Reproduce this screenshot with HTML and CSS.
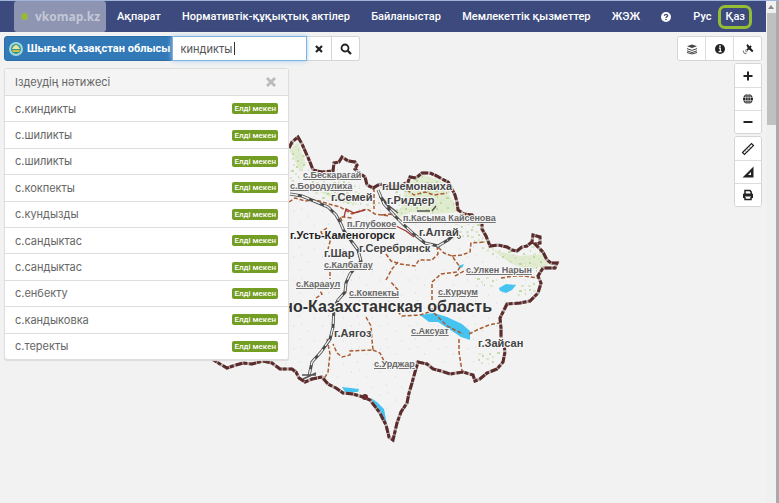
FILE: index.html
```html
<!DOCTYPE html>
<html lang="kk">
<head>
<meta charset="utf-8">
<title>vkomap.kz</title>
<link rel="stylesheet" href="styles.css">
</head>
<body>
<div class="page">
  <header class="topbar">
    <a class="brand" href="#"><span class="dot"></span>vkomap.kz</a>
    <nav class="menu">
      <a href="#">Ақпарат</a>
      <a href="#">Нормативтік-құқықтық актілер</a>
      <a href="#">Байланыстар</a>
      <a href="#">Мемлекеттік қызметтер</a>
      <a href="#">ЖЭЖ</a>
      <a href="#" aria-label="Көмек"><svg class="help" viewBox="0 0 10 10"><circle cx="5" cy="5" r="5" fill="#fff"/><path d="M3.4 3.8Q3.6 2.4 5 2.4T6.6 3.7Q6.6 4.5 5.7 4.9Q5 5.2 5 6" fill="none" stroke="#3c4a7d" stroke-width="1.3"/><circle cx="5" cy="7.5" r=".8" fill="#3c4a7d"/></svg></a>
    </nav>
    <div class="langs"><a href="#">Рус</a><a class="active" href="#">Қаз</a></div>
  </header>
  <main class="stage">
    <svg class="map" width="600" height="471" viewBox="0 32 600 471">
      <defs>
        <path id="edge" d="M289 148L292 142L298 137L302 144L306 153L310 162L313 170L322 172L333 171L334 163L339 162L342 157L348 161L355 162L357 165L355 169L362 175L365 177L367 185L373 188L380 184L390 187L400 186L408 182L410 177L416 178L422 173L430 173L437 176L442 179L448 182L451 187L455 195L457 202L458 210L464 214L472 215L478 221L482 223L482 229L486 236L490 246L498 245L507 247L512 250L517 251L522 247L527 246L532 242L533 235L540 237L540 243L535 244L543 252L547 260L551 263L557 263L555 268L549 268L543 268L538 276L541 283L538 293L530 301L520 303L507 304L503 312L500 318L501 328L501 337L504 345L505 352L503 362L497 369L487 373L480 379L475 381L473 375L463 372L450 374L441 371L433 369L427 364L418 362L415 372L412 383L409 393L407 403L401 412L397 423L393 440L389 437L386 425L380 413L370 400L363 397L353 394L343 393L336 388L328 384L322 377L312 379L305 382L299 378L296 372L292 369L280 369L272 363L263 361L252 364L243 363L236 365L227 368L220 364L212 359"/>
        <clipPath id="inside"><path d="M289 148L298 137L313 170L333 165L342 157L357 165L367 185L408 182L422 173L442 179L455 195L459 212L482 223L490 246L517 251L533 235L540 237L547 260L557 263L538 278L538 293L507 304L500 318L505 352L475 381L418 362L393 440L363 397L328 384L305 382L280 369L212 359L212 148Z"/></clipPath>
        <pattern id="grass" width="31" height="27" patternUnits="userSpaceOnUse"><path d="M1 2h3M9 1h1M17 5h2M3 8h1M12 9h3M24 3h2M27 11h2M6 14h2M19 15h1M2 20h2M13 19h2M23 21h3M9 25h1M18 26h2M29 24h1" stroke="#b2d391" stroke-width="1.5"/><path d="M5 4h3M14 3h2M21 8h3M7 11h2M16 12h2M1 16h3M11 16h2M25 16h3M6 21h3M17 22h2M27 6h2M13 24h2M22 25h2M28 20h2" stroke="#dae6c6" stroke-width="2"/></pattern>
        <pattern id="specks" width="29" height="23" patternUnits="userSpaceOnUse"><path d="M3 4h1M18 9h1M9 17h1" stroke="#c3d6e2"/><path d="M24 19h1M11 2h1" stroke="#d3dfc8"/></pattern>
      </defs>
      <use href="#edge" fill="#f3f3f4"/>
      <g clip-path="url(#inside)">
        <path d="M212 137h346v304H212z" fill="url(#specks)"/>
        <path d="M405 186L421 174L441 181L455 204L457 212L436 214L412 212L392 220L402 206ZM316 190L336 194L360 205L340 202ZM290 150L298 142L306 164L300 172ZM492 250L520 256L544 254L550 264L530 270L512 264Z" fill="#cfe4b2" opacity=".55"/>
        <path d="M288 142L299 140L307 163L299 182L288 181ZM310 174L343 173L367 195L385 204L372 209L340 203L314 198L310 184ZM387 188L421 173L445 181L456 205L439 214L413 211L391 218L402 199ZM455 215L480 222L486 244L466 242L455 228ZM480 247L521 251L535 244L555 263L536 274L520 265L497 258ZM515 283L541 282L535 299L519 298ZM477 353L502 351L498 364L479 365ZM472 273L504 281L491 289L475 286Z" fill="url(#grass)"/>
      </g>
      <g fill="#45c4f1">
        <path d="M420 315L434 313L447 317L462 324L470 331L470 340L461 337L452 331L438 322L429 322Z"/>
        <path d="M499 288L506 284L516 285L512 290L506 293L500 291Z"/>
        <path d="M371 398L377 402L384 409L387 425L382 421L377 410ZM342 387L359 389L358 392L345 392ZM436 246L442 243L439 249ZM458 266L464 264L462 268Z"/>
      </g>
      <g fill="none" stroke="#a85c32" stroke-width="1.5" stroke-dasharray="4 2">
        <path d="M289 202L295 198L305 201L316 200L329 204L340 207L352 214L360 211L367 209L375 214L389 216"/>
        <path d="M374 188L374 209M382 215L390 214L398 218M407 190L414 195L425 192L434 195L447 193M424 218L430 221L446 217"/>
        <path d="M342 221L340 217L344 217L352 218M327 228L321 232L325 239L331 238L328 249"/>
        <path d="M386 254L391 261L400 264L415 266L419 260L432 260L438 254L437 246L444 253L452 256L460 267L457 272L441 274L432 282L432 299L432 311L420 315L402 316L398 312"/>
        <path d="M386 280L392 269L398 262M452 256L462 255L470 252L471 243L485 242"/>
        <path d="M455 276L466 270M501 278L514 276L524 276L538 278"/>
        <path d="M330 272L330 279M316 298L322 294L320 291"/>
        <path d="M366 317L371 326L372 340L373 350L350 351L350 355L342 357L337 353L333 344M327 339L330 354L328 372L324 379"/>
        <path d="M373 350L380 353L385 363M398 290L390 281M459 339L459 352L462 371M469 334L479 329L489 325L499 323"/>
        <path d="M434 313L447 326L463 334"/>
      </g>
      <g fill="none" stroke="#4a4a4a" stroke-width="3">
        <path id="rails" d="M290 194L302 196L314 201L328 207L336 215L340 222L344 231L352 242L358 250L361 261L350 274L346 283L345 292L338 300L334 308L333 327L330 339L321 352L312 362L309 376"/>
        <path d="M378 190L384 204L394 215L405 226L415 235L425 243L438 246L448 240L456 233M380 196L390 209"/>
      </g>
      <g fill="none" stroke="#eee" stroke-width="1.4" stroke-dasharray="8 4">
        <use href="#rails"/>
        <path d="M378 190L384 204L394 215L405 226L415 235L425 243L438 246L448 240"/>
      </g>
      <path d="M302 375H316M303 379L316 373M417 211H430M432 211L436 206M388 205L398 213" stroke="#555" fill="none" stroke-width="1.5"/>
      <path d="M396 226L406 231L414 237M344 217L346 209L354 213L365 210" stroke="#a33731" stroke-width="1.3" fill="none"/>
      <circle cx="459" cy="237" r="1.5" fill="none" stroke="#555"/>
      <use href="#edge" fill="none" stroke="#b4aaa8" stroke-width="3"/>
      <use href="#edge" fill="none" stroke="#5c2c2c" stroke-width="3" stroke-dasharray="7 2 4 1"/>
      <circle cx="365" cy="397" r="3" fill="#672d2d"/>
      <g class="region"><text x="274" y="312">чно-Казахстанская область</text></g>
      <g class="city">
        <text x="331" y="201">г.Семей</text><text x="382" y="190">г.Шемонаиха</text><text x="387" y="204">г.Риддер</text><text x="419" y="236">г.Алтай</text><text x="290" y="239" class="main-city">г.Усть-Каменогорск</text><text x="359" y="252">г.Серебрянск</text><text x="324" y="257">г.Шар</text><text x="334" y="337">г.Аягоз</text><text x="478" y="347">г.Зайсан</text>
      </g>
      <g class="village">
        <text x="303" y="178">с.Бескарагай</text><text x="290" y="189">с.Бородулиха</text><text x="347" y="227">п.Глубокое</text><text x="403" y="221">п.Касыма Кайсенова</text><text x="324" y="268">с.Калбатау</text><text x="296" y="287">с.Карааул</text><text x="349" y="296">с.Кокпекты</text><text x="438" y="295">с.Курчум</text><text x="466" y="273">с.Улкен Нарын</text><text x="411" y="334">с.Аксуат</text><text x="374" y="367">с.Урджар</text>
      </g>
    </svg>
    <div class="overlay">
      <div class="left">
        <form class="search">
          <label class="scope" for="query"><svg class="emblem" viewBox="0 0 14 14"><circle cx="7" cy="7" r="7" fill="#a6d8db"/><circle cx="7" cy="7" r="5" fill="#2f998e"/><path d="M3 7Q7-1 11 7Z" fill="#ede4a3"/><path d="M3 8h8l-1 2H4Z" fill="#d6b946"/></svg>Шығыс Қазақстан облысы</label>
          <div class="field"><input id="query" type="text" value="киндикты"><span class="caret"></span></div>
          <button class="clear" type="button" aria-label="Тазалау"><svg viewBox="0 0 14 14"><path d="M4 4L10 10M10 4L4 10" stroke="#222" stroke-width="2.2"/></svg></button>
          <button class="find" type="button" aria-label="Іздеу"><svg viewBox="0 0 14 14"><circle cx="6" cy="6" r="3.5" fill="none" stroke="#222" stroke-width="1.8"/><path d="M8.5 8.5L12 12" stroke="#222" stroke-width="2.2"/></svg></button>
        </form>
        <section class="results">
          <header><h2>Іздеудің нәтижесі</h2><button type="button" aria-label="Жабу"><svg viewBox="0 0 14 14"><path d="M3 3L11 11M11 3L3 11" stroke="#bbb" stroke-width="2.8"/></svg></button></header>
          <ul>
            <li><a href="#">с.киндикты</a><span>Елді мекен</span></li>
            <li><a href="#">с.шиликты</a><span>Елді мекен</span></li>
            <li><a href="#">с.шиликты</a><span>Елді мекен</span></li>
            <li><a href="#">с.кокпекты</a><span>Елді мекен</span></li>
            <li><a href="#">с.кундызды</a><span>Елді мекен</span></li>
            <li><a href="#">с.сандыктас</a><span>Елді мекен</span></li>
            <li><a href="#">с.сандыктас</a><span>Елді мекен</span></li>
            <li><a href="#">с.енбекту</a><span>Елді мекен</span></li>
            <li><a href="#">с.кандыковка</a><span>Елді мекен</span></li>
            <li><a href="#">с.теректы</a><span>Елді мекен</span></li>
          </ul>
        </section>
      </div>
      <div class="tools">
        <div class="group row">
          <button type="button" aria-label="Қабаттар"><svg viewBox="0 0 14 14"><path d="M2 4.3L7 2.5L12 4.3L7 6Z" fill="#444"/><path d="M2 6.6L7 8.4L12 6.6M2 8.8L7 10.6L12 8.8M2 10.5L7 12L12 10.5" stroke="#444" fill="none"/></svg></button>
          <button type="button" aria-label="Ақпарат"><svg viewBox="0 0 14 14"><circle cx="7" cy="7" r="5" fill="#222"/><path d="M5.8 6.2H7.3V9.6M5.6 9.6H8.6" stroke="#fff" stroke-width="1.2" fill="none"/><circle cx="7" cy="4.1" r=".9" fill="#fff"/></svg></button>
          <button type="button" aria-label="Спутник"><svg viewBox="0 0 14 14"><path d="M6.5 2L8.5 4.2L9.6 3.2L10.6 4.4L9.8 6L12.4 8.8L11.2 10.2L8 7.6L6.4 8.8L5.2 7.6L6.8 6.2L5.4 3.2Z" fill="#222"/><path d="M4 7L7 10L4.5 10.5Z" fill="#999"/><path d="M2.2 8.5Q2 12 5.5 11.8" stroke="#777" fill="none"/></svg></button>
        </div>
        <div class="group">
          <button type="button" aria-label="Үлкейту"><svg viewBox="0 0 14 14"><path d="M7 2.5V11.5M2.5 7H11.5" stroke="#222" stroke-width="2"/></svg></button>
          <button type="button" aria-label="Толық көрініс"><svg viewBox="0 0 14 14"><circle cx="7" cy="7" r="5" fill="#222"/><path d="M2 5.3H12M2 8.7H12M7 2V12" stroke="#fff" stroke-width=".6"/><ellipse cx="7" cy="7" rx="2.4" ry="5" fill="none" stroke="#fff" stroke-width=".6"/></svg></button>
          <button type="button" aria-label="Кішірейту"><svg viewBox="0 0 14 14"><path d="M2.5 7H11.5" stroke="#222" stroke-width="2"/></svg></button>
        </div>
        <div class="group">
          <button type="button" aria-label="Қашықтық"><svg viewBox="0 0 14 14"><path d="M1.5 10.5L10.5 1.5L12.5 3.5L3.5 12.5Z" fill="#fff" stroke="#222" stroke-width="1.2"/><path d="M4 8.5L5 9.5M6 6.5L7 7.5M8 4.5L9 5.5" stroke="#222"/></svg></button>
          <button type="button" aria-label="Аудан"><svg viewBox="0 0 14 14"><path d="M12.5 1.5V12.5H1.5ZM10 7L7 10H10Z" fill="#222" fill-rule="evenodd"/></svg></button>
          <button type="button" aria-label="Басып шығару"><svg viewBox="0 0 14 14"><path d="M4 6V2.5H9L10.2 4V6M4 9V11.5H10V9" stroke="#222" stroke-width="1.5" fill="none"/><path d="M2 6.5Q2 5.5 3 5.5H11Q12 5.5 12 6.5V10H10V8.5H4V10H2Z" fill="#222"/></svg></button>
        </div>
      </div>
    </div>
  </main>
</div>
<div class="scrollbar"><i></i><b></b></div>
</body>
</html>
```
FILE: styles.css
```css
* { box-sizing: border-box; }
body {
  margin: 0;
  min-height: 100vh;
  display: flex;
  overflow: hidden;
  background: #f2f2f2;
  border-top: 1px solid #9fb4d8;
  font: 11px/16px Inter, "Noto Sans", sans-serif;
  color: #666;
}
a { color: inherit; text-decoration: none; white-space: nowrap; }
button { margin: 0; padding: 0; border: 0; background: #fff; display: grid; place-items: center; }
button svg { width: 14px; height: 14px; }
.page { flex: 1; min-width: 0; display: flex; flex-direction: column; }
.topbar {
  height: 31px;
  padding: 0 14px;
  display: flex;
  align-items: center;
  background: #3c4a7d;
  color: #fff;
  font-family: Roboto, sans-serif;
  font-weight: 500;
}
.brand {
  align-self: stretch;
  display: flex;
  align-items: center;
  gap: 7px;
  width: 92px;
  padding-left: 7px;
  margin-right: 11px;
  border-radius: 3px;
  background: #8d95b3;
  color: #c3c7d6;
  font-family: "Open Sans", sans-serif;
  font-size: 12px;
  font-weight: 700;
}
.dot { width: 7px; height: 7px; border-radius: 50%; background: #96b83f; }
.menu { flex: 1; display: flex; align-items: center; justify-content: space-between; margin-right: 22px; }
.help { display: block; width: 10px; height: 10px; }
.langs { display: flex; align-items: center; gap: 7px; }
.active { border: 3px solid #95bd33; border-radius: 7px; padding: 1px 4px; }
.stage { position: relative; flex: 1; }
.map { position: absolute; left: 0; top: 0; }
.map text { font-family: "Liberation Sans", sans-serif; paint-order: stroke; stroke: #f6f6f6; stroke-width: 2px; fill: #333; }
.region text { font-size: 16px; font-weight: 700; }
.city text { font-size: 11px; font-weight: 700; fill: #444; }
.city .main-city { fill: #222; }
.village text { font-size: 9px; font-weight: 700; fill: #666; text-decoration: underline; }
.overlay { position: relative; display: flex; justify-content: space-between; padding: 4px 4px 0; }
.left { width: 356px; }
.search { display: flex; height: 25px; }
.scope {
  width: 168px;
  display: flex;
  align-items: center;
  gap: 4px;
  padding-left: 4px;
  border: 1px solid #2d6da6;
  border-radius: 3px 0 0 3px;
  background: #3279b8;
  color: #fff;
  font-family: Roboto, sans-serif;
  font-weight: 700;
  white-space: nowrap;
}
.emblem { width: 14px; height: 14px; flex: none; }
.field { position: relative; width: 136px; }
.field input {
  width: 100%;
  height: 100%;
  padding: 0 8px;
  border: 1px solid #7fb2dc;
  outline: 0;
  background: #fff;
  box-shadow: 0 0 5px #a9cfee;
  color: #555;
  font: 11px Inter, "Noto Sans", sans-serif;
}
.caret { position: absolute; left: 62px; top: 6px; width: 1px; height: 13px; background: #333; }
.clear, .find { border: 1px solid #d5d5d5; border-left: 0; }
.clear { width: 25px; }
.find { width: 28px; border-radius: 0 3px 3px 0; }
.results { width: 285px; margin-top: 7px; border: 1px solid #ddd; border-radius: 3px; background: #fff; box-shadow: 0 1px 1px #ddd; }
.results header { height: 26px; padding: 0 10px; display: flex; align-items: center; justify-content: space-between; background: #f4f4f4; }
.results button { background: none; }
h2 { margin: 0; font: inherit; }
ul { list-style: none; margin: 0; padding: 0; display: grid; grid-auto-rows: 1fr; min-height: 264px; }
li { display: flex; align-items: center; justify-content: space-between; padding: 0 10px; border-top: 1px solid #ddd; }
li span { padding: 0 2px; border-radius: 2px; background: #749d23; color: #fff; font: 500 8px/11px Roboto, sans-serif; }
.tools { display: flex; flex-direction: column; align-items: flex-end; gap: 2px; }
.group { display: grid; grid-template-columns: 26px; grid-auto-rows: 23px; border: 1px solid #d5d5d5; border-radius: 3px; overflow: hidden; }
.group + .group { background: #fff; }
.group button + button { border-top: 1px solid #ddd; }
.group.row { grid-template-columns: 27px 28px 28px; }
.row button + button { border-top: 0; border-left: 1px solid #ddd; }
.scrollbar { width: 13px; border-right: 3px solid #aaa; background: #f0f0f0; display: flex; flex-direction: column; align-items: center; }
.scrollbar i { border: 3px solid transparent; border-bottom: 4px solid #888; border-top: 0; margin: 4px 0; }
.scrollbar b { width: 9px; height: 112px; background: #c0c0c0; }
```
